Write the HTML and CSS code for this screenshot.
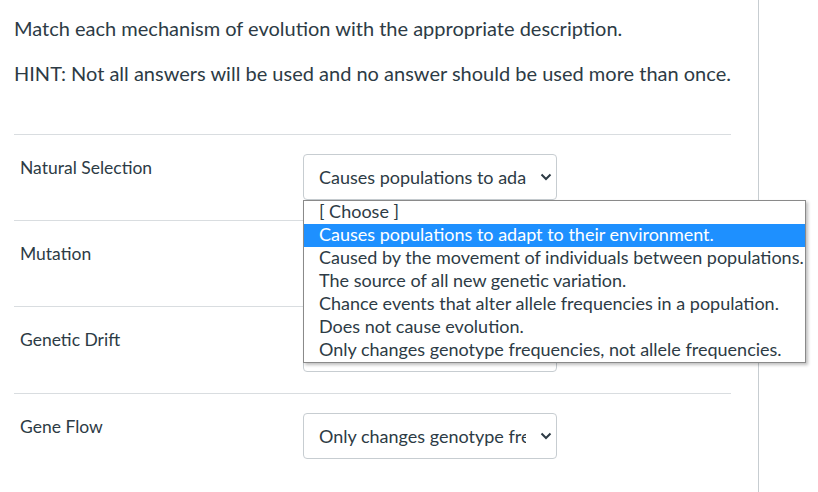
FILE: index.html
```html
<!DOCTYPE html>
<html>
<head>
<meta charset="utf-8">
<link rel="stylesheet" href="styles.css">
</head>
<body>
<div class="page">
  <div class="main">
    <div class="question">
      <p>Match each mechanism of evolution with the appropriate description.</p>
      <p>HINT: Not all answers will be used and no answer should be used more than once.</p>
    </div>
    <div class="answers">
      <div class="row">
        <div class="label">Natural Selection</div>
        <div class="select-wrap">
          <div class="select">
            <span class="value">Causes populations to adapt to their environment.</span>
            <svg class="chev" width="12" height="8" viewBox="0 0 12 8"><path d="M1.5 1.5 L6 6 L10.5 1.5" fill="none" stroke="#2d3b45" stroke-width="2"/></svg>
          </div>
          <ul class="menu">
            <li>[ Choose ]</li>
            <li class="sel">Causes populations to adapt to their environment.</li>
            <li>Caused by the movement of individuals between populations.</li>
            <li>The source of all new genetic variation.</li>
            <li>Chance events that alter allele frequencies in a population.</li>
            <li>Does not cause evolution.</li>
            <li>Only changes genotype frequencies, not allele frequencies.</li>
          </ul>
        </div>
      </div>
      <div class="row">
        <div class="label">Mutation</div>
        <div class="select-wrap">
          <div class="select">
            <span class="value">The source of all new genetic variation.</span>
            <svg class="chev" width="12" height="8" viewBox="0 0 12 8"><path d="M1.5 1.5 L6 6 L10.5 1.5" fill="none" stroke="#2d3b45" stroke-width="2"/></svg>
          </div>
        </div>
      </div>
      <div class="row row-tall">
        <div class="label">Genetic Drift</div>
        <div class="select-wrap">
          <div class="select">
            <span class="value">Chance events that alter allele frequencies in a population.</span>
            <svg class="chev" width="12" height="8" viewBox="0 0 12 8"><path d="M1.5 1.5 L6 6 L10.5 1.5" fill="none" stroke="#2d3b45" stroke-width="2"/></svg>
          </div>
        </div>
      </div>
      <div class="row">
        <div class="label">Gene Flow</div>
        <div class="select-wrap">
          <div class="select">
            <span class="value">Only changes genotype frequencies, not allele frequencies.</span>
            <svg class="chev" width="12" height="8" viewBox="0 0 12 8"><path d="M1.5 1.5 L6 6 L10.5 1.5" fill="none" stroke="#2d3b45" stroke-width="2"/></svg>
          </div>
        </div>
      </div>
    </div>
  </div>
</div>
</body>
</html>
```
FILE: styles.css
```css
html, body {
  margin: 0;
  padding: 0;
  background: #fff;
}
body {
  font-family: Lato, "Noto Sans", sans-serif;
  color: #2d3b45;
  overflow: hidden;
}
.page {
  display: flex;
  height: 492px;
}
.main {
  width: 759px;
  box-sizing: border-box;
  border-right: 1px solid #c7cdd1;
  padding: 0 27px 0 14px;
}
.question {
  padding-top: 15px;
  padding-bottom: 47px;
}
.question p {
  margin: 0;
  font-size: 20px;
  line-height: 27px;
}
.question p + p {
  margin-top: 18px;
}
.row {
  display: flex;
  border-top: 1px solid #d9dde0;
  padding: 19px 0 20px 6px;
}
.row-tall {
  padding-bottom: 21px;
}
.label {
  width: 283px;
  flex: none;
  font-size: 17.5px;
  line-height: 28px;
}
.select-wrap {
  position: relative;
}
.select {
  box-sizing: border-box;
  width: 254px;
  height: 46px;
  border: 1px solid #c7cdd1;
  border-radius: 4px;
  display: flex;
  align-items: center;
  padding: 0 0 1px 15px;
  font-size: 18px;
}
.value {
  width: 207px;
  white-space: nowrap;
  overflow: hidden;
  flex: none;
}
.chev {
  margin-left: 14px;
}
.menu {
  position: absolute;
  left: 0;
  top: 46px;
  width: 503px;
  box-sizing: border-box;
  margin: 0;
  padding: 0;
  list-style: none;
  background: #fff;
  border: 1px solid #8a8a8a;
  box-shadow: 2px 2px 3px rgba(0,0,0,0.25);
  z-index: 2;
  font-size: 18px;
}
.menu li {
  height: 23px;
  line-height: 21px;
  padding-left: 15px;
  white-space: nowrap;
}
.menu li.sel {
  background: #1e90ff;
  color: #fff;
}
```
